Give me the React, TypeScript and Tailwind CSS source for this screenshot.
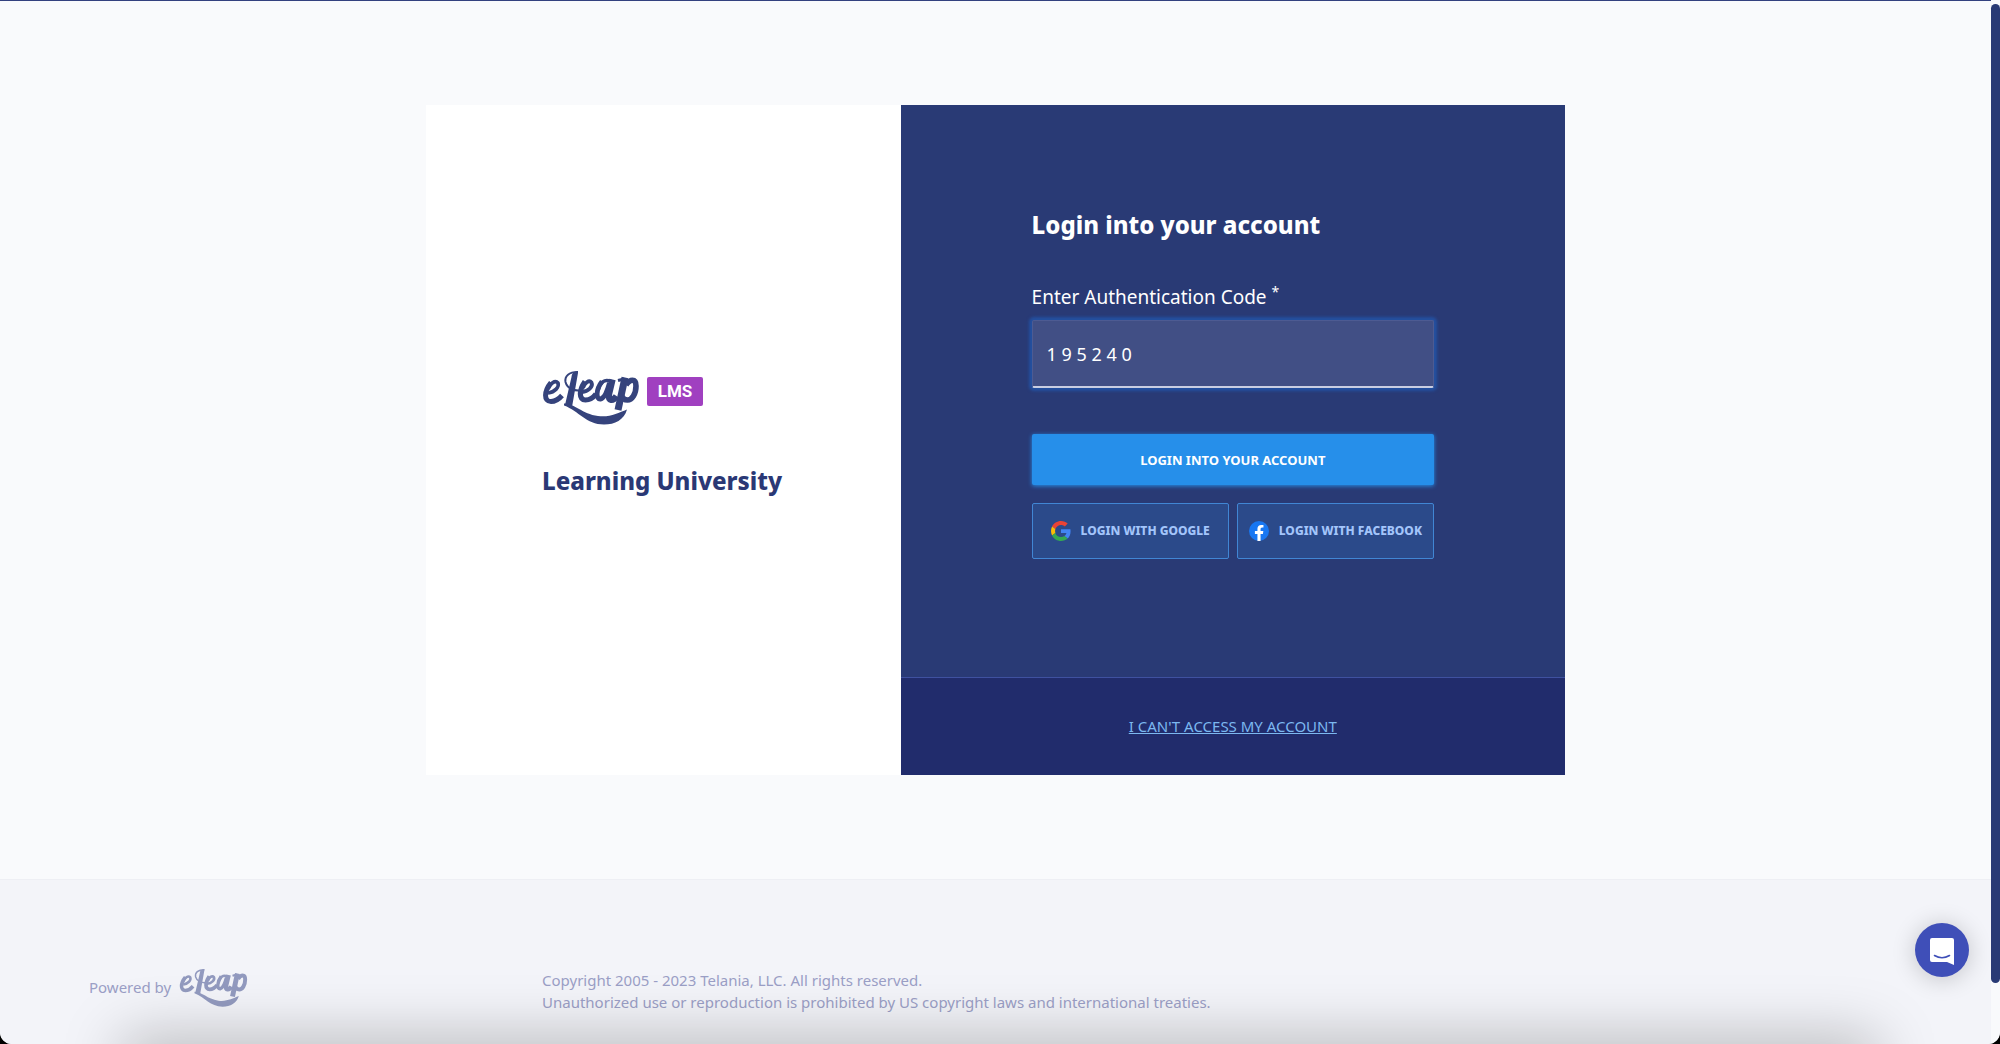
import React from "react";

function ELeapLogo({ className }: { className: string }) {
  return (
    <svg viewBox="0 0 98 54" className={className} fill="none" stroke="currentColor" role="img" aria-label="eLeap">
      {/* e */}
      <path d="M6 22C13 21 17.500 16 16 12C13 8.500 8 13 6 18" strokeWidth="3.600" />
      <path d="M9 11.500C2 20 1.500 30.500 9 30.500C14 30.500 17 28 20 24.500" strokeWidth="5" />
      {/* L stem with its loop */}
      <path d="M36 0L33.500 0.500C30.500 2 30 3 29.500 6L23 34L30 36L36 2Z" fill="currentColor" stroke="none" />
      <path d="M36 1.100C27 1 22.500 5 23.500 11C25 17 32 21 41 19" strokeWidth="2" />
      {/* e */}
      <path d="M40 21C46 20.500 51.500 15.500 49.500 11.500C47 8.500 42.500 12 41 17" strokeWidth="3.800" />
      <path d="M43 10.500C37 19 36.500 29 43.500 29C48 29 51 27 54 23" strokeWidth="5.200" />
      {/* a */}
      <path d="M69 10.500C62 7.500 58 12 56.500 18" strokeWidth="3.600" />
      <path d="M60 10.500C53.500 19 54 28.500 58.500 28C62 27.500 65 21 67.500 12" strokeWidth="4.800" />
      <path d="M70.500 8.500L67 23C66 30.500 71 30.500 74.500 25" strokeWidth="6.400" />
      {/* p */}
      <path d="M83 6.500L76 39" strokeWidth="7" />
      <path d="M76 9.500L82 8" strokeWidth="3" />
      <path d="M84 14C88 8 94 7 94 15C94 23 90 29 85.500 29C82 29 80.500 27 80 25" strokeWidth="5.600" />
      {/* swoosh */}
      <path d="M22 32.500C33 32.500 40 43 56 45C68 46.500 76 42 85 38.500C82 49 73 53.500 62 53.500C44 53.500 37 40 22 34.500Z" fill="currentColor" stroke="none" />
    </svg>
  );
}

function GoogleIcon() {
  return (
    <svg viewBox="0 0 48 48" className="size-5 shrink-0" aria-hidden="true">
      <path fill="#EA4335" d="M24 9.5c3.54 0 6.71 1.22 9.21 3.6l6.85-6.85C35.9 2.38 30.47 0 24 0 14.62 0 6.51 5.38 2.56 13.22l7.98 6.19C12.43 13.72 17.74 9.5 24 9.5z" />
      <path fill="#4285F4" d="M46.98 24.55c0-1.57-.15-3.09-.38-4.55H24v9.02h12.94c-.58 2.96-2.26 5.48-4.78 7.18l7.73 6c4.51-4.18 7.09-10.36 7.09-17.65z" />
      <path fill="#FBBC05" d="M10.53 28.59c-.48-1.45-.76-2.99-.76-4.59s.27-3.14.76-4.59l-7.98-6.19C.92 16.46 0 20.12 0 24c0 3.88.92 7.54 2.56 10.78l7.97-6.19z" />
      <path fill="#34A853" d="M24 48c6.48 0 11.93-2.13 15.89-5.81l-7.73-6c-2.15 1.45-4.92 2.3-8.16 2.3-6.26 0-11.57-4.22-13.47-9.91l-7.98 6.19C6.51 42.62 14.62 48 24 48z" />
    </svg>
  );
}

function FacebookIcon() {
  return (
    <svg viewBox="0 0 24 24" className="size-5 shrink-0" aria-hidden="true">
      <circle cx="12" cy="12" r="12" fill="#1877F2" />
      <path fill="#fff" d="M16.67 15.47l.53-3.47h-3.33V9.75c0-.95.47-1.87 1.96-1.87h1.51V4.93s-1.37-.24-2.68-.24c-2.74 0-4.53 1.66-4.53 4.67V12H7.08v3.47h3.05v8.39a12.1 12.1 0 0 0 3.74 0v-8.39h2.8z" />
    </svg>
  );
}

function ChatIcon() {
  return (
    <svg viewBox="0 0 24 27" className="h-[27px] w-6" aria-hidden="true">
      <path fill="#fff" d="M2 0H22Q24 0 24 2V27L17 24H2Q0 24 0 22V2Q0 0 2 0Z" />
      <path d="M4.500 17.500Q12 22 19.500 17.500" fill="none" stroke="#3f4fb8" strokeWidth="1.600" strokeLinecap="round" />
    </svg>
  );
}

const socials = [
  { label: "LOGIN WITH GOOGLE", icon: <GoogleIcon /> },
  { label: "LOGIN WITH FACEBOOK", icon: <FacebookIcon /> },
];

export default function App() {
  return (
    <div className="bg-black">
      <div className="relative flex min-h-screen overflow-hidden rounded-b-xl bg-[#f9fafc] font-['Noto_Sans',sans-serif]">
        <div className="flex min-w-0 grow flex-col border-t border-[#33417f]">
          <main className="flex grow items-center justify-center">
            <section className="grid w-full max-w-[1139px] grid-cols-[5fr_7fr]">
              <div className="flex flex-col justify-center bg-white pb-2.5 pl-[116px]">
                <div className="flex items-start gap-[7px]">
                  <ELeapLogo className="h-[54px] w-[98px] text-[#35437c]" />
                  <span className="mt-1.5 flex h-[29px] w-14 items-center justify-center rounded-xs bg-[#a040c0] font-['Roboto',sans-serif] text-[17px] font-bold text-white">LMS</span>
                </div>
                <h2 className="mt-[38px] text-2xl leading-9 font-extrabold text-[#2a3875]">Learning University</h2>
              </div>
              <div className="flex flex-col bg-[#293a75]">
                <form className="flex grow flex-col px-[131px] pt-[102px] pb-[118px]" onSubmit={(e) => e.preventDefault()}>
                  <h1 className="text-2xl leading-9 font-extrabold text-white">Login into your account</h1>
                  <label htmlFor="code" className="mt-9 text-[19px] leading-9 text-white">
                    Enter Authentication Code <sup className="text-sm">*</sup>
                  </label>
                  <input
                    id="code"
                    defaultValue="1 9 5 2 4 0"
                    className="mt-[5px] h-[68px] w-full rounded-xs border-x border-t border-b-2 border-[#4d5b92] border-b-[#c9cee2] bg-[#414f85] px-3.5 text-lg text-white shadow-[0_0_3px_3px_#2450a0] outline-none"
                  />
                  <button type="submit" className="mt-[46px] h-[51px] rounded-xs bg-[#268fea] pt-0.5 text-[13px] font-bold text-white shadow-[0_1px_4px_#268fea]">
                    LOGIN INTO YOUR ACCOUNT
                  </button>
                  <div className="mt-[18px] grid grid-cols-2 gap-2">
                    {socials.map((s) => (
                      <button key={s.label} type="button" className="flex h-14 items-center justify-center gap-2.5 rounded-xs border border-[#4186d4] bg-[#2b4a8a] text-xs font-extrabold whitespace-nowrap text-[#a3c5fb]">
                        {s.icon}
                        {s.label}
                      </button>
                    ))}
                  </div>
                </form>
                <div className="flex h-[98px] items-center justify-center border-t border-[#3f51a0] bg-[#212c6c]">
                  <a href="#account" className="text-[15px] text-[#7cb8f0] underline">I CAN'T ACCESS MY ACCOUNT</a>
                </div>
              </div>
            </section>
          </main>
          <footer className="flex h-[165px] items-start border-t border-[#eeeff4] bg-[#f3f4f9] pt-[89px] pl-[89px] text-[15px] text-[#9b9fc6]">
            <div className="flex w-[453px] items-start gap-2">
              <span className="leading-9">Powered by</span>
              <ELeapLogo className="h-[38px] w-[69px] text-[#929abf]" />
            </div>
            <p className="leading-[22px]">
              Copyright 2005 - 2023 Telania, LLC. All rights reserved.
              <br />
              Unauthorized use or reproduction is prohibited by US copyright laws and international treaties.
            </p>
          </footer>
        </div>
        <div className="w-[9px] bg-[#f9fafc] pt-1" aria-hidden="true">
          <div className="h-[979px] rounded-full bg-[#293a75]" />
        </div>
        <div className="pointer-events-none absolute right-32 -bottom-10 left-32 h-10 shadow-[0_0_60px_6px_rgba(0,0,0,0.26)]" />
        <button type="button" aria-label="Open chat" className="absolute right-[31px] bottom-[67px] flex size-[54px] items-center justify-center rounded-full bg-[#3f4fb8] pt-0.5 shadow-[0_2px_24px_rgba(0,0,0,0.2)]">
          <ChatIcon />
        </button>
      </div>
    </div>
  );
}
